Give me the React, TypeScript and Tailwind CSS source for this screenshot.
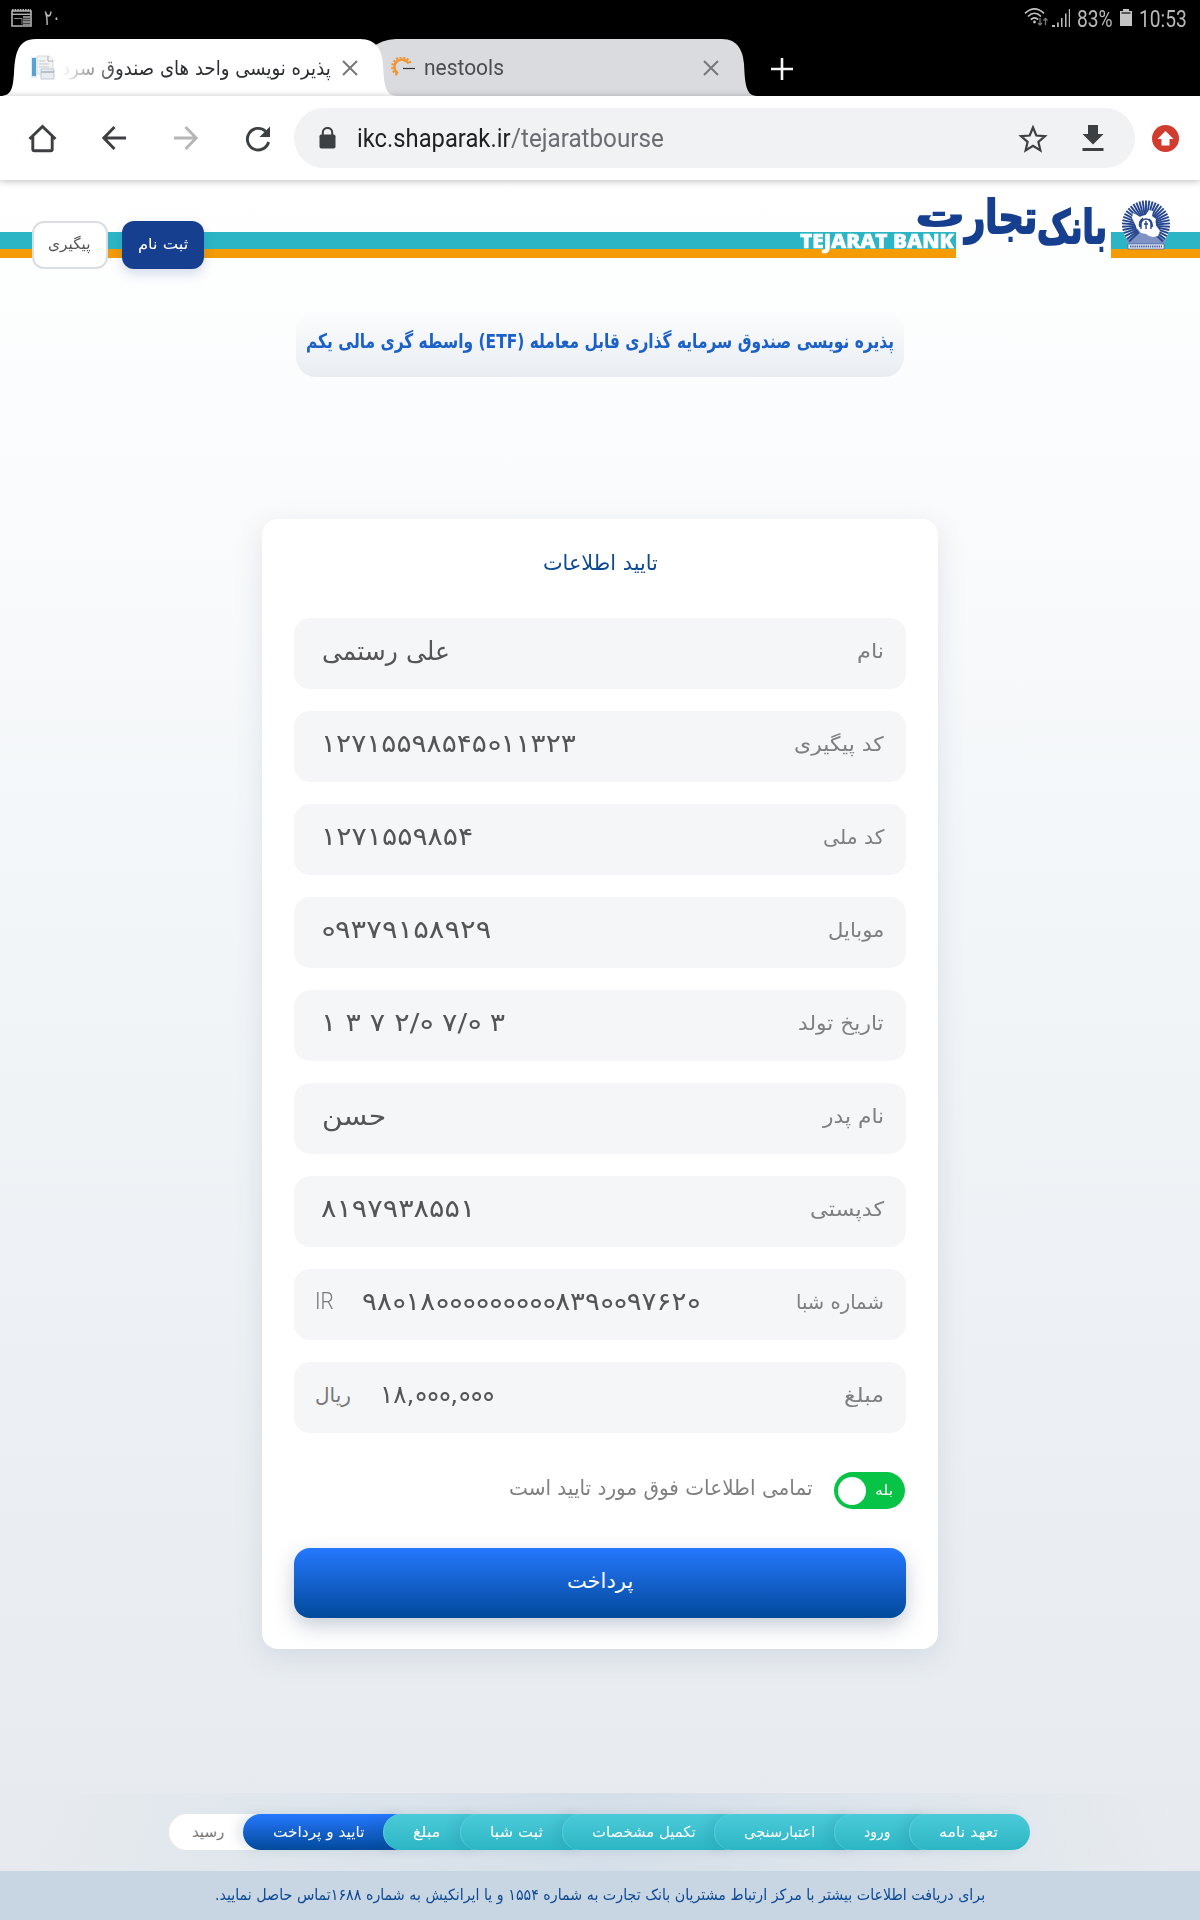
import { type ReactNode, useLayoutEffect, useRef, useState } from "react";

type FitProps = { w: number; text: ReactNode; className?: string; ltr?: boolean };

/** A single line of text condensed or widened to take exactly `w` pixels. */
function Fit({ w, text, className = "", ltr = false }: FitProps) {
  const ref = useRef<HTMLSpanElement>(null);
  const [k, setK] = useState(1);
  useLayoutEffect(() => {
    if (ref.current) setK(w / ref.current.offsetWidth);
  }, [w]);
  return (
    <span dir="ltr" className={`block shrink-0 ${className}`} style={{ width: w }}>
      <span
        ref={ref}
        dir={ltr ? "ltr" : "rtl"}
        className="inline-block origin-left whitespace-nowrap"
        style={{ transform: `scaleX(${k})` }}
      >
        {text}
      </span>
    </span>
  );
}

/** Persian digits whose zeros carry an open ring. */
function ringZeros(value: string) {
  return value.split(/(۰)/).map((part, i) =>
    part === "۰" ? (
      <span
        key={i}
        className="relative inline-block w-[12px] text-[22px] leading-10 text-[#f5f6f8] before:absolute before:left-[2px] before:top-[16px] before:size-[9px] before:rounded-full before:border-2 before:border-[#555]"
      >
        {part}
      </span>
    ) : (
      part
    ),
  );
}

function StatusBar() {
  return (
    <div className="flex h-[39px] items-start bg-black pl-[11px] pr-[13px] text-[#b9b9b9]">
      <svg className="mt-[9px]" width="21" height="19" viewBox="0 0 21 19">
        <path d="M1 2h19v15H1z" fill="none" stroke="#b5b5b5" strokeWidth="1.6" />
        <path d="M1 1h19" stroke="#b5b5b5" strokeWidth="2" strokeDasharray="1.6 1" />
        <path d="M1 5.3h19" stroke="#b5b5b5" strokeWidth="1.4" />
        <path d="M3 9.5h8v6" stroke="#8a8a8a" fill="none" strokeWidth="1" />
        <path d="M12 8h7M12 10.5h7M12 13h7M12 15.5h7" stroke="#8a8a8a" strokeWidth="1.8" />
      </svg>
      <Fit w={17} text="۲۰" ltr className="ml-[12px] mt-[4px] text-[21px] leading-7" />
      <div className="ml-auto flex items-start">
        <svg className="mt-[8px]" width="25" height="19" viewBox="0 0 25 19" fill="none" stroke="#c4c4c4" strokeWidth="1.6">
          <path d="M1 5.4Q10.500-3.500 20 5.400M4 8.500Q10.500 2 17 8.500M6.800 11.600Q10.500 8 14.200 11.600" />
          <circle cx="10.500" cy="14" r="1.400" fill="#c4c4c4" stroke="none" />
          <path d="M16 10v7M14 15l2 2 2-2M21.500 17v-6M19.500 12.500l2-2 2 2" stroke="#777" strokeWidth="1.300" />
        </svg>
        <svg className="ml-[2px] mt-[8px]" width="20" height="20" viewBox="0 0 20 20" fill="#bcbcbc">
          <path d="M1 17h3v2H1zM6 14.500h1.800V19H6zM10 10h1.500v9H10zM14 5.500h1.500V19H14zM17.800 1h1.200v18h-1.200z" />
        </svg>
        <Fit w={36} text="83%" ltr className="ml-[6px] mt-[3px] font-[Roboto] text-[24px] leading-8" />
        <svg className="ml-[6px] mt-[8px]" width="14" height="20" viewBox="0 0 14 20">
          <path d="M4 1h6v2h3v15H1V3h3z" fill="#c4c4c4" />
          <path d="M2.500 5h9" stroke="#333" strokeWidth="1.500" />
        </svg>
        <Fit w={48} text="10:53" ltr className="ml-[6px] mt-[3px] font-[Roboto] text-[24px] leading-8" />
      </div>
    </div>
  );
}

function Close({ className }: { className: string }) {
  return (
    <svg className={className} width="16" height="16" viewBox="0 0 16 16" stroke="#75777a" strokeWidth="2">
      <path d="M1 1l14 14M15 1L1 15" />
    </svg>
  );
}

function Tabs() {
  return (
    <div className="relative flex h-[57px] bg-black">
      <svg className="absolute left-0 top-0" width="780" height="57" viewBox="0 0 780 57">
        <path d="M370 57V10Q382 0 396 0H722C738 0 743 12 744 25C745 42 745 57 757 57Z" fill="#dadbdf" />
        <path d="M0 57C12 57 13 48 14 34C15 16 17 0 36 0H360C377 0 382 12 383 25C384 42 384 57 397 57Z" fill="#fff" />
      </svg>
      <div className="relative flex h-full w-[391px] shrink-0 items-center pl-[30px]">
        <svg width="25" height="25" viewBox="0 0 25 25">
          <path d="M7 1h12l4 4v14H7z" fill="#f1f2f4" stroke="#d8dbe0" />
          <path d="M18 1v5h5" fill="#fff" stroke="#999" strokeWidth=".8" />
          <path d="M1 2h6v21H1z" fill="#dcecf8" />
          <path d="M2 3h4v18H2z" fill="#5aa2d6" />
          <path d="M9 6h6M9 9h10M9 12h10" stroke="#c7cbd2" />
          <path d="M11 14h13v10H11z" fill="#e9ecf1" stroke="#c3c9d4" />
          <path d="M11 17h13" stroke="#a9b2c2" strokeWidth="1.500" />
        </svg>
        <Fit
          w={269}
          text="پذیره نویسی واحد های صندوق سرد"
          className="ml-[7px] text-[20px] leading-8 text-[#2d2f33] [mask-image:linear-gradient(to_right,transparent,black_22%)]"
        />
        <Close className="ml-[11px]" />
      </div>
      <div className="relative flex h-full items-center">
        <svg width="25" height="22" viewBox="0 0 25 22">
          <path d="M17.500 7.500A7.500 7.500 0 1 0 7 17.500" transform="translate(0 -1)" fill="none" stroke="#f29430" strokeWidth="2.400" />
          <path d="M19.500 7A9.500 9.500 0 1 0 6 19" transform="translate(0 -1)" fill="none" stroke="#f29430" strokeWidth="2.200" strokeDasharray="2.100 1.600" />
          <path d="M12 11.500h12" stroke="#333" strokeWidth="1.200" />
        </svg>
        <Fit w={80} text="nestools" ltr className="ml-[8px] font-[Roboto] text-[22px] leading-8 text-[#4a4c50]" />
        <Close className="ml-[199px]" />
        <svg className="ml-[52px] mt-[3px]" width="22" height="22" viewBox="0 0 22 22" stroke="#f4f4f4" strokeWidth="2.600">
          <path d="M11 0v22M0 11h22" />
        </svg>
      </div>
    </div>
  );
}

function Toolbar() {
  return (
    <div className="relative z-10 flex h-[84px] items-center bg-white shadow-[0_1px_7px_rgba(0,0,0,.28)]">
      <svg className="ml-[28px]" width="29" height="29" viewBox="0 0 29 29" fill="none" stroke="#3c4043" strokeWidth="2.900">
        <path d="M1.500 15L14.500 2.500L27.500 15M4.800 12v13.200q0 1.500 1.500 1.500h16.400q1.500 0 1.500-1.500V12" />
      </svg>
      <svg className="ml-[45px]" width="24" height="24" viewBox="0 0 24 24" fill="none" stroke="#3c4043" strokeWidth="2.900">
        <path d="M24 12H2M12.500 1L1.800 12l10.700 11" />
      </svg>
      <svg className="ml-[48px]" width="24" height="24" viewBox="0 0 24 24" fill="none" stroke="#b5b6b8" strokeWidth="2.900">
        <path d="M0 12h22M11.500 1l10.700 11L11.500 23" />
      </svg>
      <svg className="ml-[47px] mt-[2px]" width="26" height="26" viewBox="0 0 26 26">
        <path d="M20.500 5.200A10.800 10.800 0 1 0 23.600 16" fill="none" stroke="#3c4043" strokeWidth="2.900" />
        <path d="M25 .5V11H14.500z" fill="#3c4043" />
      </svg>
      <div className="ml-[23px] flex h-[60px] w-[841px] items-center rounded-full bg-[#f1f2f4] pl-[25px]">
        <svg width="17" height="22" viewBox="0 0 17 22">
          <path d="M3.800 9V5.600a4.700 4.700 0 0 1 9.400 0V9" fill="none" stroke="#3c4043" strokeWidth="2" />
          <rect x=".5" y="7.500" width="16" height="14" rx="1.800" fill="#3c4043" />
        </svg>
        <span className="ml-[21px] flex pt-[2px] font-[Roboto] text-[25px] leading-8">
          <Fit w={154} text="ikc.shaparak.ir" ltr className="text-[#1f2023]" />
          <Fit w={153} text="/tejaratbourse" ltr className="text-[#6a6d71]" />
        </span>
        <svg className="ml-[354px]" width="30" height="29" viewBox="0 0 30 29" fill="none" stroke="#3c4043" strokeWidth="2.200">
          <path d="M15 3.500l3.300 8 8.700.7-6.600 5.700 2 8.500L15 21.900l-7.400 4.500 2-8.500L3 12.200l8.700-.7z" />
        </svg>
        <svg className="ml-[34px]" width="22" height="26" viewBox="0 0 22 26" fill="#3c4043">
          <path d="M6 0h10v9h5.500L11 19.500.5 9H6zM.5 23h21v3H.5z" />
        </svg>
      </div>
      <svg className="ml-[17px]" width="27" height="27" viewBox="0 0 27 27">
        <circle cx="13.500" cy="13.500" r="13.500" fill="#d23c2f" />
        <path d="M13.500 6l8 8h-4v6.500h-8V14h-4z" fill="#fff" />
      </svg>
    </div>
  );
}

const rays = Array.from({ length: 35 }, (_, i) => {
  const a = ((135 + (i * 270) / 34) * Math.PI) / 180;
  const c = Math.cos(a);
  const s = Math.sin(a);
  return { x1: 25 + 10 * c, y1: 25 + 10 * s, x2: 25 + 24 * c, y2: 24.5 + 24 * s };
});

function Emblem() {
  return (
    <svg width="50" height="50" viewBox="0 0 50 50">
      <circle cx="25" cy="24.500" r="24" fill="#fff" />
      <path d="M5 40L16 29h18l11 11-2 4H7z" fill="#7e93c3" />
      {rays.map((r, i) => (
        <line key={i} {...r} stroke="#25468f" strokeWidth="1.900" />
      ))}
      <path d="M12 13l4 2 3 2 5-1 4-6 4 1-1 5 4 3-1 5 5 7-2 5-5 1-4-1-3-2-5-1-4-5-3-6-2-4z" fill="#fff" />
      <path d="M20 29v-5a5 5 0 0 1 10 0v5M22 18q-5 4-3 9M28 19q4 3 3 8M25 21v8M23 24h4" fill="none" stroke="#25468f" strokeWidth="1.400" />
      <path d="M7 44h36v5H7z" fill="#eef1f7" stroke="#4560a3" strokeWidth=".7" />
      <path d="M9 46.500h32" stroke="#4560a3" strokeWidth="2" strokeDasharray="1.500 .7" />
    </svg>
  );
}

function Header() {
  return (
    <header className="relative h-[104px]">
      <div className="pt-[52px]">
        <div className="flex h-[26px]">
          <div className="h-full w-[956px] border-b-[9px] border-[#f49b05] bg-[#2cb6c5]" />
          <div className="h-full w-[155px]" />
          <div className="h-full flex-1 border-b-[9px] border-[#f49b05] bg-[#2cb6c5]" />
        </div>
      </div>
      <div className="absolute inset-0 flex items-start">
        <button className="ml-8 mt-[41px] flex h-12 w-[76px] justify-center rounded-xl border-2 border-[#d9dde4] bg-white pr-[2px] pt-[7px] text-[#555]">
          <Fit w={43} text="پیگیری" className="text-[15px] leading-7" />
        </button>
        <button className="ml-[14px] mt-[41px] flex h-12 w-[82px] justify-center rounded-xl bg-[#163f8f] pr-[3px] pt-[9px] text-white shadow-[0_5px_12px_rgba(22,63,143,.18)]">
          <Fit w={50} text="ثبت نام" className="text-[15px] leading-7" />
        </button>
        <div className="ml-[596px] mt-[50px]">
          <Fit w={154} text="TEJARAT BANK" ltr className="font-['Open_Sans'] text-[20px] font-extrabold leading-[22px] text-white [-webkit-text-stroke:0.5px_white]" />
        </div>
        <div className="-ml-[38px] flex items-start font-bold text-[#163f8f] [-webkit-text-stroke:2px_#163f8f]">
          <Fit w={48} text="ت" className="mt-[20px] text-[32px] leading-[30px]" />
          <Fit w={72} text="تجار" className="ml-px mt-[7px] text-[46px] leading-[60px]" />
          <Fit w={70} text="بانک" className="mt-[17px] text-[46px] leading-[60px]" />
        </div>
        <div className="ml-[14px] mt-[20px]">
          <Emblem />
        </div>
      </div>
    </header>
  );
}

type Field = { label: string; lw: number; value: string; vw: number; ltr?: boolean; unit?: string; uw?: number; latin?: boolean; gap?: string };

const fields: Field[] = [
  { label: "نام", lw: 27, value: "علی رستمی", vw: 128 },
  { label: "کد پیگیری", lw: 90, value: "۱۲۷۱۵۵۹۸۵۴۵۰۱۱۳۲۳", vw: 255, ltr: true },
  { label: "کد ملی", lw: 61, value: "۱۲۷۱۵۵۹۸۵۴", vw: 152, ltr: true },
  { label: "موبایل", lw: 56, value: "۰۹۳۷۹۱۵۸۹۲۹", vw: 170, ltr: true },
  { label: "تاریخ تولد", lw: 86, value: "۱ ۳ ۷ ۲/۰ ۷/۰ ۳", vw: 184, ltr: true },
  { label: "نام پدر", lw: 61, value: "حسن", vw: 64 },
  { label: "کدپستی", lw: 74, value: "۸۱۹۷۹۳۸۵۵۱", vw: 154, ltr: true },
  { label: "شماره شبا", lw: 88, value: "۹۸۰۱۸۰۰۰۰۰۰۰۰۰۸۳۹۰۰۹۷۶۲۰", vw: 338, ltr: true, unit: "IR", uw: 19, latin: true, gap: "ml-[27px]" },
  { label: "مبلغ", lw: 40, value: "۱۸,۰۰۰,۰۰۰", vw: 114, ltr: true, unit: "ریال", uw: 36, gap: "ml-[28px]" },
];

function FieldRow({ f }: { f: Field }) {
  return (
    <div className="flex h-[71px] items-center rounded-2xl bg-[#f5f6f8] pb-[6px] pr-[22px] text-[#555]">
      {f.unit && (
        <Fit
          w={f.uw!}
          text={f.unit}
          ltr={f.latin}
          className={f.latin ? "ml-[21px] mr-px font-[Roboto] text-[23px] font-light leading-10 text-[#777]" : "ml-[21px] mr-px text-[20px] leading-10 text-[#777]"}
        />
      )}
      <Fit
        w={f.vw}
        text={f.ltr ? ringZeros(f.value) : f.value}
        ltr={f.ltr}
        className={f.unit ? `${f.gap} h-10 text-[25px] leading-10 [&>span]:[unicode-bidi:bidi-override]` : f.ltr ? "ml-[27px] h-10 text-[25px] leading-10 [&>span]:[unicode-bidi:bidi-override]" : "ml-7 pt-px text-[26px] leading-10"}
      />
      <Fit w={f.lw} text={f.label} className="ml-auto text-[20px] leading-10 text-[#7f7f7f]" />
    </div>
  );
}

function Card() {
  return (
    <main className="mx-auto mt-[142px] flex h-[1130px] w-[676px] flex-col rounded-2xl bg-white px-8 shadow-[0_8px_28px_rgba(60,90,130,.13)]">
      <div className="flex h-[99px] justify-center pt-[24px]">
        <Fit w={115} text="تایید اطلاعات" className="text-[21px] leading-10 text-[#0d4a94]" />
      </div>
      <div className="flex flex-col gap-[22px]">
        {fields.map((f) => (
          <FieldRow key={f.label} f={f} />
        ))}
      </div>
      <div className="mt-[39px] flex h-[37px] items-center justify-end pr-px">
        <Fit w={304} text="تمامی اطلاعات فوق مورد تایید است" className="mr-[21px] pb-[5px] text-[21px] leading-8 text-[#808080]" />
        <div className="flex h-[37px] w-[71px] items-center rounded-full bg-[#07c346] pl-1 text-white">
          <span className="size-[28px] rounded-full bg-white" />
          <Fit w={18} text="بله" className="ml-[9px] pb-[2px] text-[14px] leading-6" />
        </div>
      </div>
      <button className="mt-[39px] flex h-[70px] shrink-0 justify-center rounded-2xl bg-linear-to-b from-[#2578ff] to-[#014a9b] pt-[13px] text-white shadow-[0_8px_20px_rgba(30,60,100,.25)]">
        <Fit w={66} text="پرداخت" className="text-[21px] leading-10" />
      </button>
    </main>
  );
}

const steps = [
  { t: "رسید", w: 32, box: "w-[102px] pl-[23px] bg-white text-[#777]" },
  { t: "تایید و پرداخت", w: 91, box: "-ml-[28px] w-[168px] pl-[30px] bg-linear-to-b from-[#2578ff] to-[#014a9b] text-white" },
  { t: "مبلغ", w: 28, box: "-ml-[28px] w-[105px] pl-[29px] bg-linear-to-b from-[#4bcbd9] to-[#2bb5c4] text-white" },
  { t: "ثبت شبا", w: 53, box: "-ml-[28px] w-[130px] pl-[29px] bg-linear-to-b from-[#4bcbd9] to-[#2bb5c4] text-white" },
  { t: "تکمیل مشخصات", w: 104, box: "-ml-[28px] w-[180px] pl-[29px] bg-linear-to-b from-[#4bcbd9] to-[#2bb5c4] text-white" },
  { t: "اعتبارسنجی", w: 71, box: "-ml-[28px] w-[148px] pl-[29px] bg-linear-to-b from-[#4bcbd9] to-[#2bb5c4] text-white" },
  { t: "ورود", w: 26, box: "-ml-[28px] w-[103px] pl-[29px] bg-linear-to-b from-[#4bcbd9] to-[#2bb5c4] text-white" },
  { t: "تعهد نامه", w: 59, box: "-ml-[28px] w-[121px] pl-[29px] bg-linear-to-b from-[#4bcbd9] to-[#2bb5c4] text-white" },
];

function Steps() {
  return (
    <nav className="mt-auto flex h-[78px] items-center bg-linear-to-r from-transparent from-2% via-[#d5dfe9] via-50% to-transparent to-98% pl-[169px]">
      <div className="flex w-[861px]">
        {steps.map((s, i) => (
          <div
            key={s.t}
            className={`flex h-9 shrink-0 items-center rounded-full pb-px ${i > 1 ? "border-l border-[#5ad0dc]" : ""} ${i > 0 ? "shadow-[-6px_0_12px_rgba(20,80,120,.12)]" : ""} ${s.box}`}
          >
            <Fit w={s.w} text={s.t} className="text-[15px] leading-7" />
          </div>
        ))}
      </div>
    </nav>
  );
}

export default function App() {
  return (
    <div className="flex h-[1920px] w-[1200px] flex-col overflow-hidden font-['DejaVu_Sans',sans-serif]">
      <StatusBar />
      <Tabs />
      <Toolbar />
      <div className="flex flex-1 flex-col bg-linear-to-b from-white via-[#f0f4f7] via-50% to-[#e6eaee]">
        <Header />
        <h1 className="mx-auto mt-[27px] flex h-[66px] w-[608px] justify-center rounded-[20px] bg-linear-to-b from-transparent to-[#e9edf2] pt-[12px] text-[#1c61c8]">
          <Fit w={588} text="پذیره نویسی صندوق سرمایه گذاری قابل معامله (ETF) واسطه گری مالی یکم" className="text-[20px] font-bold leading-9" />
        </h1>
        <Card />
        <Steps />
        <footer className="flex h-[49px] justify-center bg-[#c8d5e2] pt-[8px] text-[#0d4a94]">
          <Fit
            w={770}
            text="برای دریافت اطلاعات بیشتر با مرکز ارتباط مشتریان بانک تجارت به شماره ۱۵۵۴ و یا ایرانکیش به شماره ۱۶۸۸تماس حاصل نمایید."
            className="text-[15.5px] leading-8"
          />
        </footer>
      </div>
    </div>
  );
}
